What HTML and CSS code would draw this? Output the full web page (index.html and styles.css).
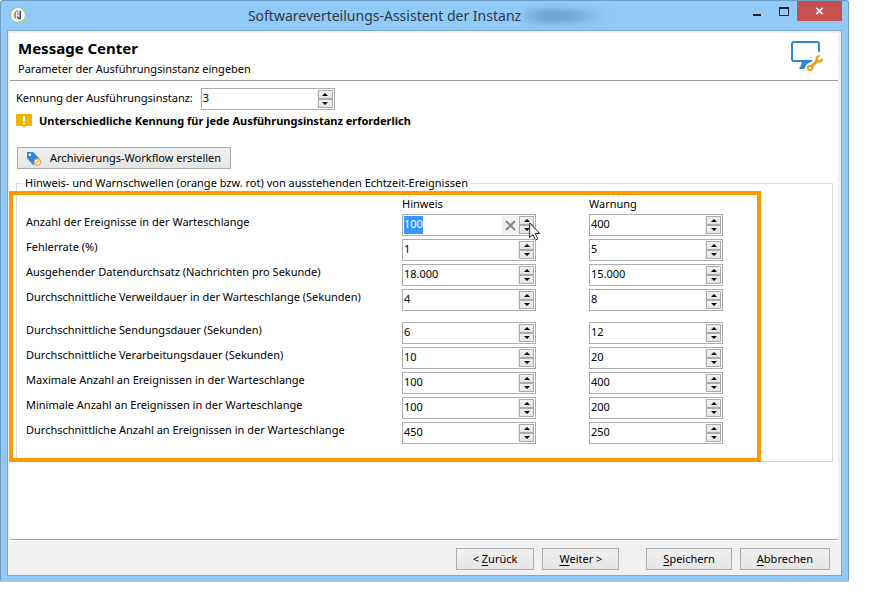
FILE: index.html
```html
<!DOCTYPE html>
<html lang="de">
<head>
<meta charset="utf-8">
<title>Softwareverteilungs-Assistent</title>
<link rel="stylesheet" href="styles.css">
</head>
<body>
<div class="window">
  <header class="titlebar">
    <svg class="app-icon" viewBox="0 0 16 16" aria-hidden="true">
      <circle cx="8" cy="8" r="7.4" fill="#fff" stroke="#a9c95c"/>
      <path d="M3.500 11.500V6.500l2-2v7" fill="#b5b9b5"/>
      <path d="M5.500 11.500V6q0-2.500 2.500-2.500" fill="none" stroke="#8b8f8b" stroke-width="1.200"/>
      <path d="M8 4.500v4" stroke="#777"/>
      <path d="M10.200 3.500v8q-2.200.5-2.700-2" fill="none" stroke="#333" stroke-width="1.300"/>
    </svg>
    <h1 class="caption">Softwareverteilungs-Assistent der Instanz<span class="redacted"></span></h1>
    <div class="window-controls">
      <button class="control" aria-label="Minimieren"><svg viewBox="0 0 10 9"><path d="M1 8h8" stroke="#222" stroke-width="2"/></svg></button>
      <button class="control" aria-label="Maximieren"><svg viewBox="0 0 10 9"><path d="M.5 1v7.500h9V1" fill="none" stroke="#222"/><path d="M0 1h10" stroke="#222" stroke-width="2"/></svg></button>
      <button class="control close" aria-label="Schließen"><svg viewBox="0 0 10 9"><path d="M1.500 1l7 7M8.500 1l-7 7" stroke="#fff" stroke-width="1.800"/></svg></button>
    </div>
  </header>
  <div class="client">
    <div class="heading">
      <div>
        <h2>Message Center</h2>
        <p>Parameter der Ausführungsinstanz eingeben</p>
      </div>
      <svg class="heading-icon" viewBox="0 0 32 30" aria-hidden="true">
        <path d="M28 11V3q0-2-2-2H3Q1 1 1 3v15q0 2 2 2h18" fill="none" stroke="#2e86d6" stroke-width="2"/>
        <path d="M11 20h10l-5 3-3 5H8q3-4 3-8z" fill="#2e86d6"/>
        <circle cx="19" cy="27" r="2.200" fill="none" stroke="#f0960f" stroke-width="1.800"/>
        <path d="M20.500 25.500l5.500-5.500" stroke="#f0960f" stroke-width="3"/>
        <path d="M28.500 14.700q-4 1-2.500 5 4 2 5.500-2" fill="none" stroke="#f0960f" stroke-width="2.200"/>
      </svg>
    </div>
    <main class="content">
      <div class="identifier">
        <label for="kennung">Kennung der Ausführungsinstanz:</label>
        <div class="spinner"><input id="kennung" value="3"><span class="arrows"><button class="up" aria-label="Erhöhen"></button><button class="down" aria-label="Verringern"></button></span></div>
      </div>
      <p class="notice">
        <svg viewBox="0 0 16 14" aria-hidden="true"><path d="M1 0h14q1 0 1 1v10q0 1-1 1h-5l-2 2-2-2H1q-1 0-1-1V1q0-1 1-1z" fill="#efb800"/><path d="M8 2v5M8 8.500v2" stroke="#fff" stroke-width="2"/></svg>
        Unterschiedliche Kennung für jede Ausführungsinstanz erforderlich
      </p>
      <button class="push archive">
        <svg viewBox="0 0 16 15" aria-hidden="true"><path d="M1 1h6l6 6-6 7-6-7z" fill="#2e86d6"/><circle cx="3.800" cy="3.800" r="1.300" fill="#fff"/><circle cx="11.500" cy="11" r="3.200" fill="#f7f1e6" stroke="#eda33c" stroke-width="1.200"/><path d="M10 12.500l1-1.500 2-1.500" fill="none" stroke="#eda33c"/></svg>
        Archivierungs-Workflow erstellen
      </button>
      <fieldset class="group">
        <legend>Hinweis- und Warnschwellen (orange bzw. rot) von ausstehenden Echtzeit-Ereignissen</legend>
        <div class="highlight"></div>
        <table class="thresholds">
          <thead>
            <tr><td></td><th scope="col">Hinweis</th><th scope="col">Warnung</th></tr>
          </thead>
          <tbody>
            <tr><th scope="row">Anzahl der Ereignisse in der Warteschlange</th>
              <td><div class="spinner active"><input aria-label="Hinweis: Anzahl der Ereignisse" value="100"><button class="clear" aria-label="Löschen"><svg viewBox="0 0 11 11"><path d="M1 1l9 9M10 1l-9 9" stroke="#888" stroke-width="2"/></svg></button><span class="arrows"><button class="up" aria-label="Erhöhen"></button><button class="down" aria-label="Verringern"></button></span>
                <svg class="pointer" viewBox="0 0 12 19" aria-hidden="true"><path d="M.7 1v14.500l3.300-3 2.500 5.500 2.300-1-2.500-5.500h4.500z" fill="#fff" stroke="#223"/></svg></div></td>
              <td><div class="spinner"><input aria-label="Warnung: Anzahl der Ereignisse" value="400"><span class="arrows"><button class="up" aria-label="Erhöhen"></button><button class="down" aria-label="Verringern"></button></span></div></td></tr>
            <tr><th scope="row">Fehlerrate (%)</th>
              <td><div class="spinner"><input aria-label="Hinweis: Fehlerrate" value="1"><span class="arrows"><button class="up" aria-label="Erhöhen"></button><button class="down" aria-label="Verringern"></button></span></div></td>
              <td><div class="spinner"><input aria-label="Warnung: Fehlerrate" value="5"><span class="arrows"><button class="up" aria-label="Erhöhen"></button><button class="down" aria-label="Verringern"></button></span></div></td></tr>
            <tr><th scope="row">Ausgehender Datendurchsatz (Nachrichten pro Sekunde)</th>
              <td><div class="spinner"><input aria-label="Hinweis: Datendurchsatz" value="18.000"><span class="arrows"><button class="up" aria-label="Erhöhen"></button><button class="down" aria-label="Verringern"></button></span></div></td>
              <td><div class="spinner"><input aria-label="Warnung: Datendurchsatz" value="15.000"><span class="arrows"><button class="up" aria-label="Erhöhen"></button><button class="down" aria-label="Verringern"></button></span></div></td></tr>
            <tr><th scope="row">Durchschnittliche Verweildauer in der Warteschlange (Sekunden)</th>
              <td><div class="spinner"><input aria-label="Hinweis: Verweildauer" value="4"><span class="arrows"><button class="up" aria-label="Erhöhen"></button><button class="down" aria-label="Verringern"></button></span></div></td>
              <td><div class="spinner"><input aria-label="Warnung: Verweildauer" value="8"><span class="arrows"><button class="up" aria-label="Erhöhen"></button><button class="down" aria-label="Verringern"></button></span></div></td></tr>
          </tbody>
          <tbody class="second">
            <tr><th scope="row">Durchschnittliche Sendungsdauer (Sekunden)</th>
              <td><div class="spinner"><input aria-label="Hinweis: Sendungsdauer" value="6"><span class="arrows"><button class="up" aria-label="Erhöhen"></button><button class="down" aria-label="Verringern"></button></span></div></td>
              <td><div class="spinner"><input aria-label="Warnung: Sendungsdauer" value="12"><span class="arrows"><button class="up" aria-label="Erhöhen"></button><button class="down" aria-label="Verringern"></button></span></div></td></tr>
            <tr><th scope="row">Durchschnittliche Verarbeitungsdauer (Sekunden)</th>
              <td><div class="spinner"><input aria-label="Hinweis: Verarbeitungsdauer" value="10"><span class="arrows"><button class="up" aria-label="Erhöhen"></button><button class="down" aria-label="Verringern"></button></span></div></td>
              <td><div class="spinner"><input aria-label="Warnung: Verarbeitungsdauer" value="20"><span class="arrows"><button class="up" aria-label="Erhöhen"></button><button class="down" aria-label="Verringern"></button></span></div></td></tr>
            <tr><th scope="row">Maximale Anzahl an Ereignissen in der Warteschlange</th>
              <td><div class="spinner"><input aria-label="Hinweis: Maximale Anzahl" value="100"><span class="arrows"><button class="up" aria-label="Erhöhen"></button><button class="down" aria-label="Verringern"></button></span></div></td>
              <td><div class="spinner"><input aria-label="Warnung: Maximale Anzahl" value="400"><span class="arrows"><button class="up" aria-label="Erhöhen"></button><button class="down" aria-label="Verringern"></button></span></div></td></tr>
            <tr><th scope="row">Minimale Anzahl an Ereignissen in der Warteschlange</th>
              <td><div class="spinner"><input aria-label="Hinweis: Minimale Anzahl" value="100"><span class="arrows"><button class="up" aria-label="Erhöhen"></button><button class="down" aria-label="Verringern"></button></span></div></td>
              <td><div class="spinner"><input aria-label="Warnung: Minimale Anzahl" value="200"><span class="arrows"><button class="up" aria-label="Erhöhen"></button><button class="down" aria-label="Verringern"></button></span></div></td></tr>
            <tr><th scope="row">Durchschnittliche Anzahl an Ereignissen in der Warteschlange</th>
              <td><div class="spinner"><input aria-label="Hinweis: Durchschnittliche Anzahl" value="450"><span class="arrows"><button class="up" aria-label="Erhöhen"></button><button class="down" aria-label="Verringern"></button></span></div></td>
              <td><div class="spinner"><input aria-label="Warnung: Durchschnittliche Anzahl" value="250"><span class="arrows"><button class="up" aria-label="Erhöhen"></button><button class="down" aria-label="Verringern"></button></span></div></td></tr>
          </tbody>
        </table>
      </fieldset>
    </main>
    <footer class="actions">
      <div class="pair">
        <button class="push"><span>&lt; <u>Z</u>urück</span></button>
        <button class="push"><span><u>W</u>eiter &gt;</span></button>
      </div>
      <div class="pair">
        <button class="push"><span><u>S</u>peichern</span></button>
        <button class="push"><span><u>A</u>bbrechen</span></button>
      </div>
    </footer>
  </div>
</div>
</body>
</html>
```

FILE: styles.css
```css
* { box-sizing: border-box; }

body {
  margin: 0;
  padding: 0 23px 18px 0;
  height: 100vh;
  background: #fff;
  color: #000;
  font: 11px/16px "Noto Sans", "Open Sans", sans-serif;
}

h1, h2, p { margin: 0; }

button, input { font: inherit; color: inherit; margin: 0; border-radius: 0; }
button { padding: 0; }
svg { display: block; flex: none; }

.window {
  display: flex;
  flex-direction: column;
  height: 100%;
  padding: 0 6px 6px 6px;
  background: #91c9f7;
  border: 1px solid #6f9cc3;
  border-bottom: 0;
  border-radius: 3px 3px 2px 2px;
}

.titlebar {
  display: flex;
  align-items: flex-start;
  height: 29px;
  padding-left: 3px;
}
.app-icon { width: 16px; height: 16px; margin-top: 6px; }
.caption {
  display: flex;
  flex: 1;
  justify-content: center;
  padding-left: 84px;
  font-size: 14px;
  line-height: 30px;
  font-weight: 400;
  color: #2b3a48;
}
.redacted {
  width: 80px;
  height: 14px;
  margin: 8px 0 0 4px;
  background: linear-gradient(90deg, #82b8e4, #6fa3ce 30%, #75a9d4 60%, #91c9f7);
  filter: blur(3px);
}
.window-controls { display: flex; }
.control {
  display: grid;
  place-items: center;
  width: 27px;
  height: 20px;
  border: 0;
  background: none;
}
.control svg { width: 10px; height: 9px; }
.close { width: 45px; background: #c75050; }
.close svg { width: 9px; height: 8px; }

.client {
  display: flex;
  flex: 1;
  flex-direction: column;
  min-height: 0;
  padding: 2px 3px 0 2px;
  background: #f0f0f0;
  border: 1px solid #77a8d2;
}

.heading {
  display: flex;
  justify-content: space-between;
  height: 48px;
  padding: 5px 15px 0 8px;
  background: #fff;
  border-bottom: 1px solid #a0a0a0;
}
.heading h2 { font-size: 15px; line-height: 20px; font-weight: 700; }
.heading p { margin-top: 1px; line-height: 20px; }
.heading-icon { width: 32px; height: 30px; margin-top: 3px; }

.content { flex: 1; padding: 7px 5px 0 6px; background: #fff; }

.identifier { display: flex; align-items: flex-start; gap: 8px; }
.identifier label { line-height: 20px; }

.spinner {
  position: relative;
  display: flex;
  justify-content: space-between;
  width: 134px;
  height: 22px;
  padding: 1px;
  background: #fff;
  border: 1px solid #abadb3;
}
.spinner input {
  flex: 1;
  min-width: 0;
  padding: 0 0 2px;
  border: 0;
  outline: 0;
  background: none;
}
.arrows {
  display: flex;
  flex-direction: column;
  width: 16px;
  padding-left: 1px;
  background: #f0f0f0;
}
.arrows button {
  display: grid;
  place-items: center;
  flex: 1;
  border: 1px solid #acacac;
  background: linear-gradient(#f1f1f1, #e5e5e5);
}
.arrows button::before { content: ""; border: solid transparent; border-width: 0 3px; }
.arrows .up::before { border-bottom: 3px solid #000; }
.arrows .down::before { border-top: 3px solid #000; }

.active input { flex: 0 0 19px; background: #39f; color: #fff; }
.clear {
  display: grid;
  place-items: center;
  width: 16px;
  margin-left: auto;
  border: 0;
  background: #f0f0f0;
}
.clear svg { width: 11px; height: 11px; }
.pointer { position: absolute; left: 126px; top: 7px; width: 12px; height: 19px; }

.notice {
  display: flex;
  align-items: center;
  gap: 7px;
  height: 22px;
  font-weight: 700;
}
.notice svg { width: 16px; height: 14px; }

.push {
  display: flex;
  align-items: center;
  justify-content: center;
  height: 22px;
  border: 1px solid #acacac;
  background: linear-gradient(#f0f0f0, #e5e5e5);
}
.push u { text-underline-offset: 2px; }
.archive { gap: 8px; margin: 15px 0 0 1px; padding: 0 9px 0 8px; }
.archive svg { width: 16px; height: 15px; }

.group {
  position: relative;
  min-width: 0;
  margin: 6px 0 0;
  padding: 0 0 14px 9px;
  border: 1px solid #dcdcdc;
}
.group legend { margin-left: -3px; padding: 0 2px; }
.highlight {
  position: absolute;
  inset: 0 71px -1px -8px;
  border: 4px solid #f90;
  pointer-events: none;
}

.thresholds { margin-top: 5px; border-collapse: collapse; }
.thresholds th { text-align: left; font-weight: 400; white-space: nowrap; }
.thresholds td, .thresholds th { padding: 0 0 3px; vertical-align: top; }
.thresholds thead th { height: 18px; padding: 0; }
.thresholds td:first-child { width: 376px; }
.thresholds td:nth-child(2) { width: 187px; }
.second tr:first-child > * { padding-top: 8px; }

.actions {
  display: flex;
  justify-content: flex-end;
  gap: 27px;
  padding: 8px 8px 5px;
  border-top: 1px solid #a0a0a0;
  box-shadow: inset 0 1px #fff;
}
.pair { display: flex; gap: 8px; }
.actions .push { padding: 0 16px; }
```
